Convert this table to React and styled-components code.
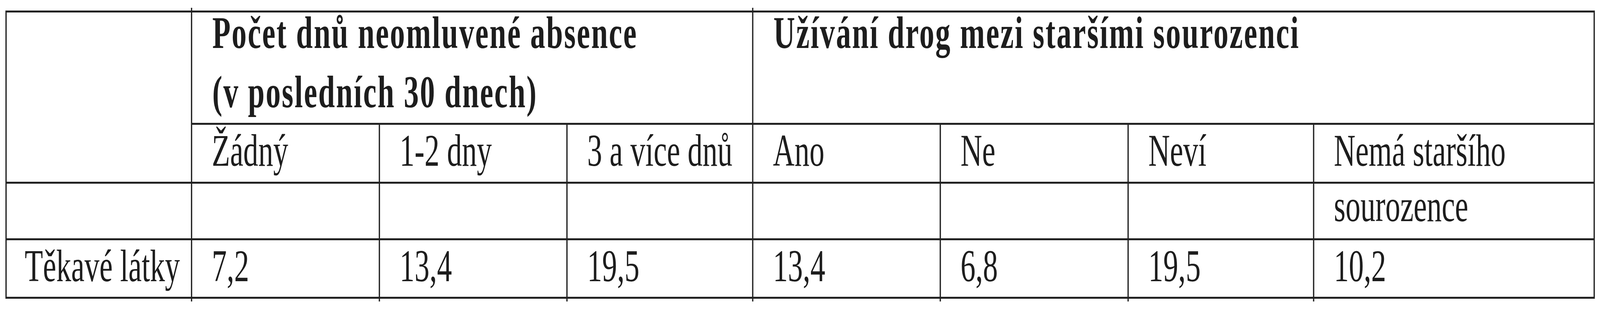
import styled, { createGlobalStyle, css } from "styled-components";

const GlobalStyle = createGlobalStyle`
  html, body {
    margin: 0;
    padding: 0;
    background: #fff;
    overflow: hidden;
  }
  body {
    font-family: "Liberation Serif", "Times New Roman", serif;
    color: #1d1d1d;
  }
`;

const LINE = "#222";
const DESIGN_WIDTH = 6210;

// the page is drawn at the width of the scan and squeezed to the window
const Stage = styled.div`
  width: ${DESIGN_WIDTH}px;
  height: 800px;
  transform-origin: 0 0;
`;

const Page = styled.div`
  padding: 27px 0 0 21px;
`;

// the rules of the table are the grid background showing through the gaps
const Table = styled.div`
  display: grid;
  width: max-content;
  grid-template-columns: 715px 724px 723px 716px 723px 724px 715px 1084px;
  grid-template-rows: 283px 146px 140px 145px;
  gap: 5px;
  padding: 5px;
  background: ${LINE};
`;

const Cell = styled.div`
  position: relative;
  background: #fff;
  box-sizing: border-box;
  padding: ${(p) => (p.$tight ? "0" : "2px")} 20px 0 ${(p) => p.$pl ?? 76}px;
  font-size: 116px;
  line-height: ${(p) => (p.$tight ? "114px" : "128px")};
  white-space: nowrap;
  grid-column: ${(p) => (p.$span ? `span ${p.$span}` : "auto")};
  grid-row: ${(p) => (p.$rows ? `span ${p.$rows}` : "auto")};

  /* little overshoots of the column rules, as in the printed table */
  ${(p) =>
    p.$stubTop &&
    css`
      &::before {
        content: "";
        position: absolute;
        left: -5px;
        top: -12px;
        width: 5px;
        height: 7px;
        background: ${LINE};
      }
    `}
  ${(p) =>
    p.$stubBottom &&
    css`
      &::after {
        content: "";
        position: absolute;
        left: -5px;
        bottom: -12px;
        width: 5px;
        height: 7px;
        background: ${LINE};
      }
    `}
`;

const HeadCell = styled(Cell)`
  padding-top: 0;
  padding-left: 78px;
  font-weight: 700;
  letter-spacing: 4.3px;
`;

const Heading = styled.div`
  line-height: 152px;
  margin-top: -24px;
`;

const subHeads = ["Žádný", "1-2 dny", "3 a více dnů", "Ano", "Ne", "Neví", "Nemá staršího"];
const values = ["7,2", "13,4", "19,5", "13,4", "6,8", "19,5", "10,2"];

const App = () => {
  const k = Math.min(1, window.innerWidth / DESIGN_WIDTH);

  return (
    <>
      <GlobalStyle />
      <Stage style={{ transform: `scaleX(${k})` }}>
        <Page>
          <Table>
            {/* header */}
            <Cell $rows={2} />
            <HeadCell $span={3} $stubTop>
              <Heading>
                Počet dnů neomluvené absence
                <br />
                (v posledních 30 dnech)
              </Heading>
            </HeadCell>
            <HeadCell $span={4} $stubTop>
              <Heading>Užívání drog mezi staršími sourozenci</Heading>
            </HeadCell>

            {subHeads.map((h) => (
              <Cell key={h}>{h}</Cell>
            ))}

            {/* spill-over row */}
            {Array.from({ length: 7 }).map((_, i) => (
              <Cell key={"e" + i} />
            ))}
            <Cell $tight>sourozence</Cell>

            {/* data */}
            <Cell $pl={70}>Těkavé látky</Cell>
            {values.map((v, i) => (
              <Cell key={"v" + i} $stubBottom>
                {v}
              </Cell>
            ))}
          </Table>
        </Page>
      </Stage>
    </>
  );
};

export default App;
